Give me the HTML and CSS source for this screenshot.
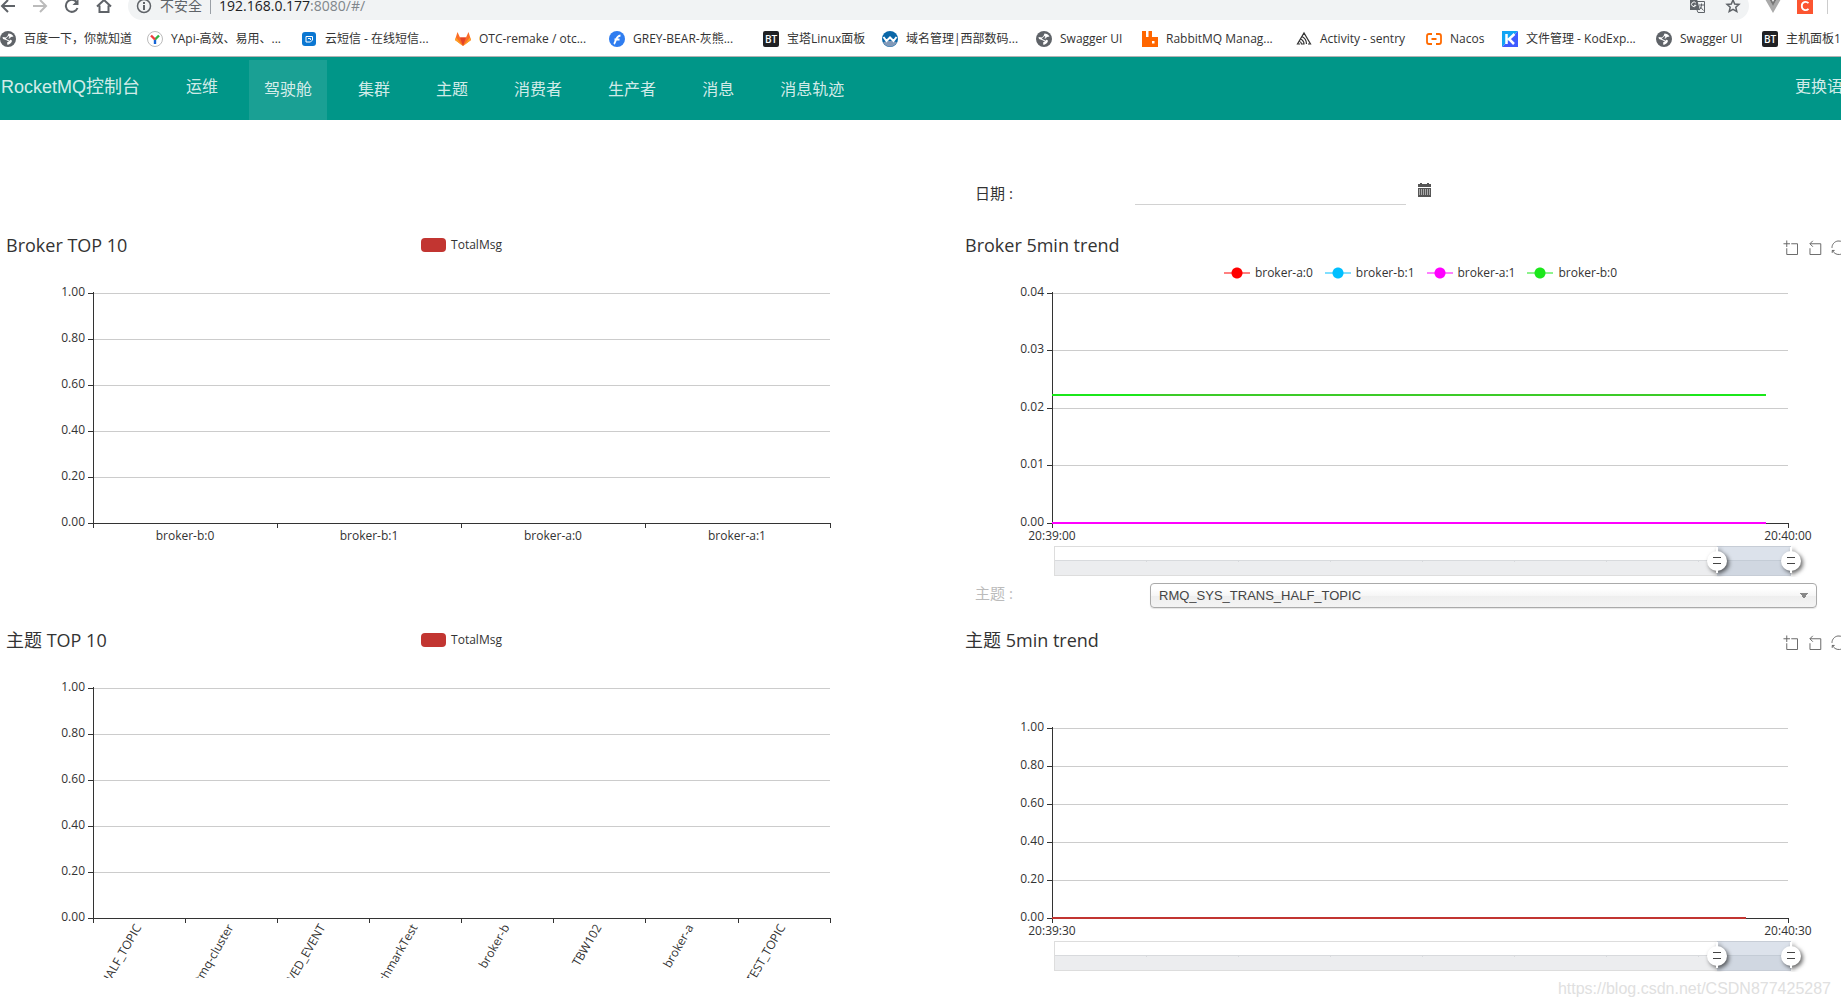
FILE: index.html
```html
<!DOCTYPE html>
<html lang="zh-CN">
<head>
<meta charset="utf-8">
<title>RocketMQ控制台</title>
<link rel="stylesheet" href="styles.css">
</head>
<body>
<svg class="defs" aria-hidden="true">
  <symbol id="globe" viewBox="0 0 16 16"><circle cx="8" cy="8" r="8" fill="#5f6368"/><path d="M8.500 2.500c2 0 4 1 5 3L11 6 9 8l3 1.500c0 2-2 4-4.500 4.500L7 11.500l2-1L6 9 3 8l-.5-2L6 6.500 7.500 5z" fill="#fff"/><path d="M9 5.500 7 7.500l3 1.500" fill="none" stroke="#5f6368" stroke-width="1.500"/></symbol>
  <symbol id="bt" viewBox="0 0 16 16"><rect width="16" height="16" rx="2" fill="#202124"/><text x="8" y="12" text-anchor="middle" class="icon-bt">BT</text></symbol>
  <symbol id="zoom-area" viewBox="-2 -2 62 62"><path d="M0 13.500h26.900M13.500 26.900V0M32.100 13.500H58V58H13.500V32.100"/></symbol>
  <symbol id="zoom-back" viewBox="-2 -2 62 62"><path d="M22 1.400 9.900 13.500l12.300 12.300M10.300 13.500H54.900v44.600H10.300v-26"/></symbol>
  <symbol id="restore" viewBox="-2 -2 62 62"><path d="M47 18.900h9.800V8.700M56.300 20.100C52.100 9 40.500.6 26.800 2.100 12.600 3.700 1.600 16.200 2.100 30.600M13 41.100H3.100v10.200M3.700 39.900c4.200 11.100 15.800 19.500 29.500 18 14.200-1.600 25.200-14.100 24.700-28.500"/></symbol>
  <symbol id="data-zoom" viewBox="0 0 921 32">
    <rect x="94" y="1" width="737" height="30" fill="#ddd"/>
    <rect x="95" y="2" width="735" height="28" fill="#fff"/>
    <rect x="95" y="16" width="735" height="14" fill="#ecedef"/>
    <path d="M95 15h735v1H95zM186 15h1v2h-1zM278 15h1v2h-1zM370 15h1v2h-1zM462 15h1v2h-1zM554 15h1v2h-1zM646 15h1v2h-1zM738 15h1v2h-1z" fill="#d8dadd"/>
    <rect x="757" y="1" width="74" height="30" fill="#a7b7cc" opacity=".4"/>
    <g class="handle"><path d="M757 2v26M831 2v26" stroke="#fff" stroke-width="2"/><circle cx="757" cy="16" r="10"/><circle cx="831" cy="16" r="10"/></g>
    <path d="M753 12h8v1h-8zM753 18h8v1h-8zM827 12h8v1h-8zM827 18h8v1h-8z" fill="#444"/>
  </symbol>
</svg>

<div class="browser">
  <div class="toolbar">
    <button class="tool" aria-label="后退"><svg viewBox="0 0 16 16"><path d="M15 8H2M8 2 2 8l6 6" class="ln"/></svg></button>
    <button class="tool dim" aria-label="前进"><svg viewBox="0 0 16 16"><path d="M1 8h13M8 2l6 6-6 6" class="ln"/></svg></button>
    <button class="tool" aria-label="刷新"><svg viewBox="0 0 16 16"><path d="M13.500 10a6 6 0 1 1-1-6" class="ln"/><path d="M14.500 1v6h-6z" fill="currentColor"/></svg></button>
    <button class="tool" aria-label="主页"><svg viewBox="0 0 16 16"><path d="M1 8.500 8 2l7 6.500M3.500 7.500V14h9V7.500" class="ln"/></svg></button>
    <div class="address">
      <svg class="icon" viewBox="0 0 16 16"><circle cx="8" cy="8" r="6.500" fill="none" stroke="#5f6368" stroke-width="1.500"/><path d="M7 7h2v5H7zM7 4h2v2H7z" fill="#5f6368"/></svg>
      <span class="insecure">不安全</span>
      <span class="url">192.168.0.177<span>:8080/#/</span></span>
      <svg class="icon translate" viewBox="0 0 16 16"><path d="M1 1h7l3 11H1z" fill="#5f6368"/><path d="M8 3.500h7.500v11H9l-1-2.500M10 7h5M12.500 5.500V7c0 2-1 4-2.500 5M11 8.500l3.500 4" fill="none" stroke="#5f6368"/><path d="M6.800 5A2.300 2.300 0 1 0 7 7.300H5" fill="none" stroke="#fff"/></svg>
      <svg class="icon" viewBox="0 0 16 16"><path d="m8 2 1.700 4 4.300.4-3.200 2.900 1 4.200L8 11.300l-3.800 2.200 1-4.200L2 6.400 6.300 6z" fill="none" stroke="#5f6368" stroke-width="1.500"/></svg>
    </div>
    <svg class="icon" viewBox="0 0 16 16"><path d="M0 1h4l4 6.500L12 1h4L8 15z" fill="#aaa"/><path d="M4 1h2.500L8 4l1.500-3H12L8 8z" fill="#777"/></svg>
    <svg class="icon" viewBox="0 0 16 16"><rect width="16" height="16" fill="#fc5531"/><path d="M11.500 5.200C9 2.600 4.800 4 4.800 8s4.200 5.400 6.700 2.800" fill="none" stroke="#fff" stroke-width="1.800"/></svg>
    <span class="edge"></span>
  </div>
  <nav class="bookmarks" aria-label="书签">
    <a href="#"><svg class="icon"><use href="#globe"/></svg>百度一下，你就知道</a>
    <a href="#"><svg class="icon" viewBox="0 0 16 16"><circle cx="8" cy="8" r="7.500" fill="#fff" stroke="#bbb"/><path d="M8 8.500V13" stroke="#1565d8" stroke-width="2.400"/><path d="m8 8.500 4-4" stroke="#2fb344" stroke-width="2.400"/><path d="m8 8.500-4-4" stroke="#f03e3e" stroke-width="2.400"/></svg>YApi-高效、易用、...</a>
    <a href="#"><svg class="icon" viewBox="0 0 16 16"><rect x="1" y="1" width="14" height="14" rx="3" fill="#0b77d2"/><path d="M5 5.500h6.500V9L9.500 11H5zM7 7.500h2.500V9" fill="none" stroke="#fff"/></svg>云短信 - 在线短信...</a>
    <a href="#"><svg class="icon" viewBox="0 0 16 16"><path d="m8 15-8-6 2.500-8L5 6.500h6L13.500 1 16 9z" fill="#fc6d26"/><path d="M8 15 5 6.500h6z" fill="#e24329"/><path d="M0 9l1-2.500 7 8.500zM16 9l-1-2.500L8 15z" fill="#fca326"/></svg>OTC-remake / otc...</a>
    <a href="#"><svg class="icon" viewBox="0 0 16 16"><circle cx="8" cy="8" r="8" fill="#2f7df0"/><path d="M5 13c2-2 1.500-8 6.500-8.500M5.500 8.500h5" fill="none" stroke="#fff" stroke-width="1.800"/></svg>GREY-BEAR-灰熊...</a>
    <a href="#"><svg class="icon"><use href="#bt"/></svg>宝塔Linux面板</a>
    <a href="#"><svg class="icon" viewBox="0 0 16 16"><circle cx="8" cy="8" r="8" fill="#0a67a8"/><path d="M1 11.500c4-2 10-2 14 0C12 17 4 17 1 11.500z" fill="#8199b8"/><path d="m1.500 6 3 4L8 6.500l3.500 3.500 3-4" fill="none" stroke="#fff" stroke-width="2"/></svg>域名管理|西部数码...</a>
    <a href="#"><svg class="icon"><use href="#globe"/></svg>Swagger UI</a>
    <a href="#"><svg class="icon" viewBox="0 0 16 16"><path d="M0 0h4v6h2.500V0h3.500v6h6v10H0z" fill="#f60"/><path d="M10 10h2.500v2.500H10z" fill="#fff"/></svg>RabbitMQ Manag...</a>
    <a href="#"><svg class="icon" viewBox="0 0 16 16"><path d="M4 13H1.500L8 2l6.500 11H12M6 5.500c3 1.500 4.500 4 4.500 7.500M4.500 8c2 1 3.500 2.500 3.500 5H5.500C5.500 11.500 4.500 10.500 3 10" fill="none" stroke="#333" stroke-width="1.200"/></svg>Activity - sentry</a>
    <a href="#"><svg class="icon" viewBox="0 0 16 16"><path d="M6 3H3Q1 3 1 5v6q0 2 2 2h3M10 3h3q2 0 2 2v6q0 2-2 2h-3M5.500 8h5" fill="none" stroke="#ff6a00" stroke-width="1.800"/></svg>Nacos</a>
    <a href="#"><svg class="icon" viewBox="0 0 16 16"><path d="M0 0h16L0 16z" fill="#12a5f4"/><path d="M16 0v16H0z" fill="#3f5cff"/><path d="M4.500 3v10M12.500 3 7 8l5 5" fill="none" stroke="#fff" stroke-width="2.500"/></svg>文件管理 - KodExp...</a>
    <a href="#"><svg class="icon"><use href="#globe"/></svg>Swagger UI</a>
    <a href="#"><svg class="icon"><use href="#bt"/></svg>主机面板1</a>
  </nav>
</div>

<header class="navbar">
  <a class="brand" href="#">RocketMQ控制台</a>
  <a class="ops" href="#">运维</a>
  <ul class="menu">
    <li><a class="active" href="#">驾驶舱</a></li>
    <li><a href="#">集群</a></li>
    <li><a href="#">主题</a></li>
    <li><a href="#">消费者</a></li>
    <li><a href="#">生产者</a></li>
    <li><a href="#">消息</a></li>
    <li><a href="#">消息轨迹</a></li>
  </ul>
  <a class="language" href="#">更换语言</a>
</header>

<main class="dashboard">
  <form class="filter date-filter">
    <label for="date">日期 :</label>
    <input id="date" type="text">
    <button class="calendar" type="button" aria-label="选择日期"><svg viewBox="0 0 13 14"><path d="M0 1h2V0h2v1h5V0h2v1h2v3H0zM0 5h13v9H0z" fill="#555"/><path d="M1 7h11M1 9h11M1 11h11" stroke="#fff" stroke-dasharray="1 1"/></svg></button>
  </form>

  <section class="chart left">
    <div class="chart-head">
      <h2>Broker TOP 10</h2>
      <div class="legend"><span><i class="swatch"></i>TotalMsg</span></div>
    </div>
    <svg class="plot" viewBox="0 0 921 296">
      <path class="grid" d="M92 6h737v1H92zM92 52h737v1H92zM92 98h737v1H92zM92 144h737v1H92zM92 190h737v1H92z"/>
      <path class="axis" d="M92 5h1v231h737v5h-1v-4H645v4h-1v-4H461v4h-1v-4H277v4h-1v-4H93v4h-1zM87 6h5v1h-5zM87 52h5v1h-5zM87 98h5v1h-5zM87 144h5v1h-5zM87 190h5v1h-5zM87 236h5v1h-5z"/>
      <g class="y-labels"><text x="84" y="9">1.00</text><text x="84" y="55">0.80</text><text x="84" y="101">0.60</text><text x="84" y="147">0.40</text><text x="84" y="193">0.20</text><text x="84" y="239">0.00</text></g>
      <g class="x-labels"><text x="184" y="253">broker-b:0</text><text x="368" y="253">broker-b:1</text><text x="552" y="253">broker-a:0</text><text x="736" y="253">broker-a:1</text></g>
    </svg>
  </section>

  <section class="chart right">
    <div class="chart-head">
      <h2>Broker 5min trend</h2>
      <div class="tools">
        <button aria-label="区域缩放"><svg><use href="#zoom-area"/></svg></button>
        <button aria-label="区域缩放还原"><svg><use href="#zoom-back"/></svg></button>
        <button aria-label="还原"><svg><use href="#restore"/></svg></button>
      </div>
      <div class="legend wide">
        <span><i class="marker red"></i>broker-a:0</span>
        <span><i class="marker blue"></i>broker-b:1</span>
        <span><i class="marker magenta"></i>broker-a:1</span>
        <span><i class="marker green"></i>broker-b:0</span>
      </div>
    </div>
    <svg class="plot" viewBox="0 0 921 296">
      <path class="grid" d="M92 6h736v1H92zM92 63h736v1H92zM92 121h736v1H92zM92 178h736v1H92z"/>
      <path class="axis" d="M92 5h1v231h736v5h-1v-4H93v4h-1zM87 6h5v1h-5zM87 63h5v1h-5zM87 121h5v1h-5zM87 178h5v1h-5zM87 236h5v1h-5z"/>
      <rect x="92" y="107" width="714" height="2" fill="#1be71b"/>
      <rect x="190" y="107" width="540" height="2" fill="#3ccb28"/>
      <rect x="92" y="235" width="714" height="2" fill="#f0f"/>
      <g class="y-labels"><text x="84" y="9">0.04</text><text x="84" y="66">0.03</text><text x="84" y="124">0.02</text><text x="84" y="181">0.01</text><text x="84" y="239">0.00</text></g>
      <g class="x-labels"><text x="92" y="253">20:39:00</text><text x="828" y="253">20:40:00</text></g>
      <use href="#data-zoom" y="258" width="921" height="32"/>
    </svg>
  </section>

  <form class="filter topic-filter">
    <label for="topic">主题 :</label>
    <select id="topic"><option>RMQ_SYS_TRANS_HALF_TOPIC</option></select>
  </form>

  <section class="chart left">
    <div class="chart-head">
      <h2>主题 TOP 10</h2>
      <div class="legend"><span><i class="swatch"></i>TotalMsg</span></div>
    </div>
    <svg class="plot" viewBox="0 0 921 296">
      <path class="grid" d="M92 6h737v1H92zM92 52h737v1H92zM92 98h737v1H92zM92 144h737v1H92zM92 190h737v1H92z"/>
      <path class="axis" d="M92 5h1v231h737v5h-1v-4H738v4h-1v-4H645v4h-1v-4H553v4h-1v-4H461v4h-1v-4H369v4h-1v-4H277v4h-1v-4H185v4h-1v-4H93v4h-1zM87 6h5v1h-5zM87 52h5v1h-5zM87 98h5v1h-5zM87 144h5v1h-5zM87 190h5v1h-5zM87 236h5v1h-5z"/>
      <g class="y-labels"><text x="84" y="9">1.00</text><text x="84" y="55">0.80</text><text x="84" y="101">0.60</text><text x="84" y="147">0.40</text><text x="84" y="193">0.20</text><text x="84" y="239">0.00</text></g>
      <g class="slanted">
        <text transform="translate(137 243) rotate(-60)">RMQ_SYS_TRANS_HALF_TOPIC</text>
        <text transform="translate(229 243) rotate(-60)">rocketmq-cluster</text>
        <text transform="translate(321 243) rotate(-60)">OFFSET_MOVED_EVENT</text>
        <text transform="translate(413 243) rotate(-60)">BenchmarkTest</text>
        <text transform="translate(505 243) rotate(-60)">broker-b</text>
        <text transform="translate(597 243) rotate(-60)">TBW102</text>
        <text transform="translate(689 243) rotate(-60)">broker-a</text>
        <text transform="translate(781 243) rotate(-60)">SELF_TEST_TOPIC</text>
      </g>
    </svg>
  </section>

  <section class="chart right">
    <div class="chart-head">
      <h2>主题 5min trend</h2>
      <div class="tools">
        <button aria-label="区域缩放"><svg><use href="#zoom-area"/></svg></button>
        <button aria-label="区域缩放还原"><svg><use href="#zoom-back"/></svg></button>
        <button aria-label="还原"><svg><use href="#restore"/></svg></button>
      </div>
    </div>
    <svg class="plot" viewBox="0 0 921 296">
      <path class="grid" d="M92 46h736v1H92zM92 84h736v1H92zM92 122h736v1H92zM92 160h736v1H92zM92 198h736v1H92z"/>
      <path class="axis" d="M92 45h1v191h736v5h-1v-4H93v4h-1zM87 46h5v1h-5zM87 84h5v1h-5zM87 122h5v1h-5zM87 160h5v1h-5zM87 198h5v1h-5zM87 236h5v1h-5z"/>
      <rect x="92" y="235" width="694" height="2" fill="#c23531"/>
      <g class="y-labels"><text x="84" y="49">1.00</text><text x="84" y="87">0.80</text><text x="84" y="125">0.60</text><text x="84" y="163">0.40</text><text x="84" y="201">0.20</text><text x="84" y="239">0.00</text></g>
      <g class="x-labels"><text x="92" y="253">20:39:30</text><text x="828" y="253">20:40:30</text></g>
      <use href="#data-zoom" y="258" width="921" height="32"/>
    </svg>
  </section>
</main>
<footer class="watermark">https://blog.csdn.net/CSDN877425287</footer>
</body>
</html>
```
FILE: styles.css
```css
* { box-sizing: border-box; }

body {
  margin: 0;
  overflow-x: hidden;
  background: #fff;
  color: #333;
  font: 12px/16px "Open Sans", "Noto Sans CJK SC", sans-serif;
}

a { color: inherit; text-decoration: none; }
button { padding: 0; border: 0; background: none; color: inherit; }
.defs { position: absolute; width: 0; height: 0; }
.icon { flex: none; width: 16px; height: 16px; }
.icon-bt { fill: #fff; font-size: 10px; font-weight: 600; }

/* Browser chrome */
.browser { overflow: hidden; border-bottom: 1px solid #b3b3b3; }

.toolbar {
  display: flex;
  align-items: center;
  gap: 16px;
  height: 28px;
  margin-top: -8px;
  color: #5f6368;
}
.tool { flex: none; width: 16px; height: 16px; }
.tool svg { display: block; width: 16px; height: 16px; }
.tool.dim { color: #bbb; }
.ln { fill: none; stroke: currentColor; stroke-width: 2; }

.address {
  display: flex;
  flex: 1;
  align-items: center;
  gap: 8px;
  height: 28px;
  padding: 0 8px;
  border-radius: 14px;
  background: #f1f3f4;
  font-size: 14px;
}
.insecure { padding-right: 8px; border-right: 1px solid #9aa0a6; line-height: 16px; }
.url { color: #202124; }
.url span { color: #80868b; }
.translate { margin: 0 12px 0 auto; }
.edge { width: 14px; height: 16px; margin-left: -2px; border-left: 1px solid #ccc; }

.bookmarks {
  display: grid;
  grid-template-columns: 147px repeat(4, 154px) 119px 154px 106px 154px 130px 76px 154px 106px 1fr;
  align-items: center;
  height: 36px;
  padding-top: 1px;
  white-space: nowrap;
}
.bookmarks a { display: flex; align-items: center; gap: 8px; }

/* Site navigation */
.navbar {
  display: flex;
  height: 63px;
  overflow: hidden;
  background: #009688;
  color: rgba(255, 255, 255, .84);
  font: 16px/60px "Liberation Sans", "Noto Sans CJK SC", sans-serif;
  white-space: nowrap;
}
.brand { flex: none; padding-left: 1px; font-size: 18px; }
.ops { margin-left: 31px; padding: 0 15px; }
.menu {
  display: flex;
  gap: 16px;
  margin: 3px auto 0 16px;
  padding: 0;
  list-style: none;
}
.menu a { display: block; padding: 0 15px; }
.menu .active { background: rgba(255, 255, 255, .1); }
.language { width: 46px; }

/* Dashboard grid; the trend column runs past the window edge */
.dashboard {
  display: grid;
  grid-template-columns: 1fr 1fr;
  column-gap: 38px;
  width: calc(100% + 40px);
  padding-left: 1px;
}
.left { grid-column: 1; }
.right { grid-column: 2; }

.filter {
  display: flex;
  grid-column: 2;
  align-items: flex-start;
  padding: 0 64px 0 15px;
  font-size: 15px;
}
.date-filter { height: 113px; padding-top: 58px; }
.topic-filter { height: 45px; }
.filter label { line-height: 30px; }
.date-filter label { width: 160px; }
.topic-filter label { width: 175px; color: #bbb; line-height: 20px; }

.date-filter input {
  width: 271px;
  height: 27px;
  padding: 0;
  border: 0;
  border-bottom: 1px solid #d2d2d2;
  background: none;
}
.calendar { margin: 5px 0 0 12px; }
.calendar svg { display: block; width: 13px; height: 14px; }

.topic-filter select {
  flex: 1;
  height: 25px;
  padding: 0 8px;
  appearance: none;
  border: 1px solid #aaa;
  border-radius: 4px;
  background:
    linear-gradient(to bottom right, #888 50%, transparent 0) right 8px center / 4px 6px no-repeat,
    linear-gradient(to bottom left, #888 50%, transparent 0) right 12px center / 4px 6px no-repeat,
    linear-gradient(#fff 20%, #f6f6f6 50%, #eee 52%, #f4f4f4);
  box-shadow: 0 1px 1px rgba(0, 0, 0, .1);
  color: #444;
  font: 13px "Liberation Sans", sans-serif;
}

/* Charts */
.chart-head {
  display: grid;
  grid-template-columns: 1fr auto 1fr;
  grid-template-rows: 24px 30px;
  align-items: center;
}
.chart-head h2 {
  margin: 0;
  padding-left: 5px;
  font-size: 18px;
  font-weight: 400;
  line-height: 24px;
  white-space: nowrap;
}
.legend { display: flex; gap: 12px; }
.legend span { display: flex; align-items: center; gap: 5px; }
.legend.wide { grid-column: 1 / -1; justify-self: center; padding-top: 2px; }
.swatch { width: 25px; height: 14px; border-radius: 4px; background: #c23531; }
.marker {
  width: 26px;
  height: 12px;
  background:
    radial-gradient(circle, currentColor 5px, transparent 6px),
    linear-gradient(rgba(255, 255, 255, .5), rgba(255, 255, 255, .5)) center / 26px 2px no-repeat,
    linear-gradient(currentColor, currentColor) center / 26px 2px no-repeat;
}
.red { color: #f00; }
.blue { color: #00bfff; }
.magenta { color: #f0f; }
.green { color: #1be71b; }

.tools {
  display: flex;
  grid-column: 3;
  gap: 9px;
  justify-content: flex-end;
  padding: 4px 35px 0 0;
}
.tools svg {
  display: block;
  width: 15px;
  height: 15px;
  fill: none;
  stroke: #666;
  stroke-width: 4;
}

.plot { display: block; width: 100%; height: auto; font-size: 12px; }
.grid { fill: #ccc; }
.axis { fill: #333; }
.y-labels, .x-labels, .slanted { fill: #333; }
.y-labels, .slanted { text-anchor: end; }
.x-labels { text-anchor: middle; }
.slanted text { dominant-baseline: central; }
.handle { fill: #fff; filter: drop-shadow(2px 2px 2px rgba(0, 0, 0, .6)); }

.watermark {
  padding: 0 10px;
  color: #e0e0e0;
  font: 16px/22px "Liberation Sans", sans-serif;
  text-align: right;
}
```
